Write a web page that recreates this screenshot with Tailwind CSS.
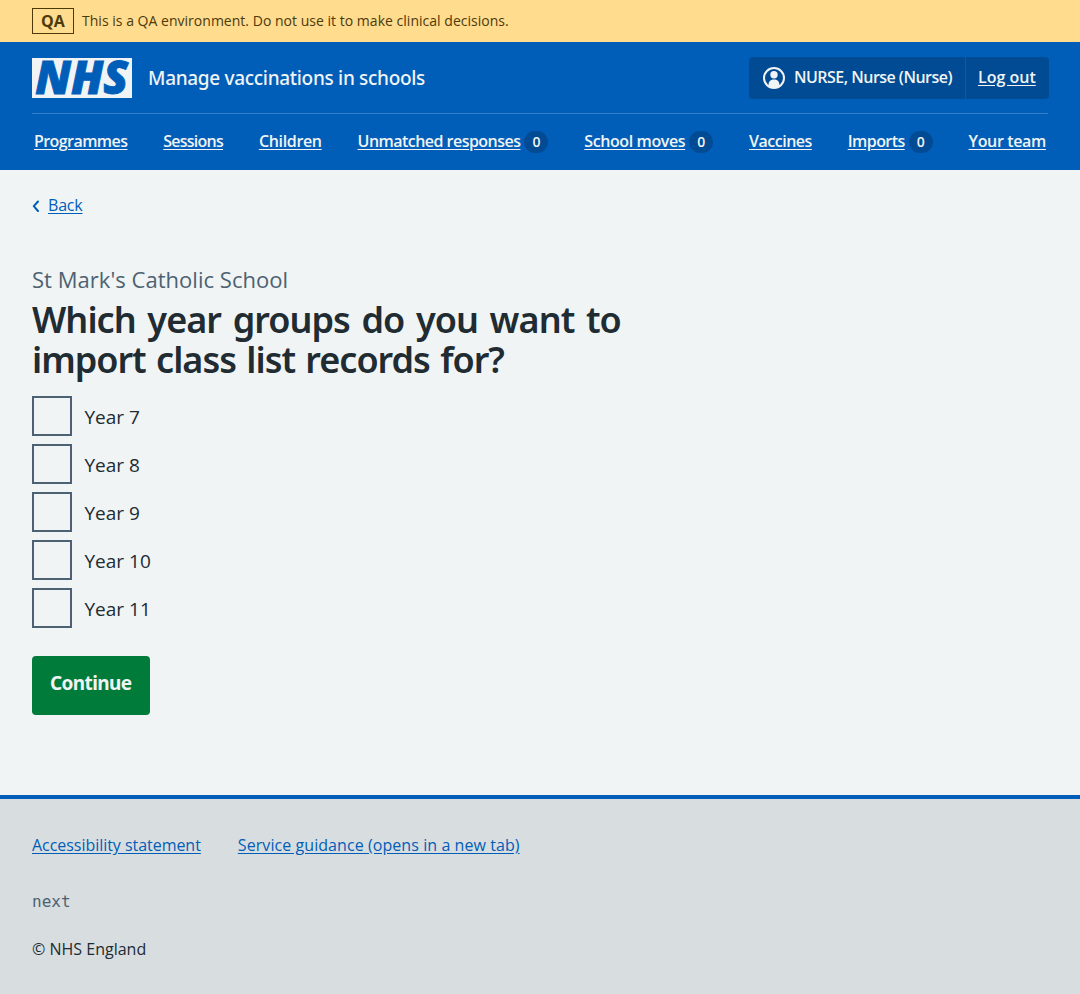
<!DOCTYPE html>
<html lang="en">
<head>
<meta charset="utf-8">
<title>Manage vaccinations in schools</title>
<script src="https://cdn.jsdelivr.net/npm/@tailwindcss/browser@4"></script>
</head>
<body class="flex min-h-[994px] flex-col bg-[#f0f4f5] font-['Open_Sans','Noto_Sans',sans-serif] text-[#212b32]">
  <div class="flex h-[42px] items-center gap-2 bg-[#ffdc8e] px-8 text-[#4d3a0b]">
    <strong class="flex h-[26px] w-[42px] items-center justify-center border border-[#4d3a0b] text-base leading-none font-bold">QA</strong>
    <span class="text-sm tracking-[0.02px]">This is a QA environment. Do not use it to make clinical decisions.</span>
  </div>

  <header class="h-32 bg-[#005eb8] px-8 text-[#f0f4f5]">
    <div class="-mr-px flex h-[71px] items-center justify-between">
      <div class="flex items-center gap-4">
        <svg class="h-10 w-[100px] overflow-visible" viewBox="0 0 100 40" role="img" aria-label="NHS">
          <rect width="100" height="40" fill="#f0f4f5"/>
          <text x="3.2" y="36" textLength="93" lengthAdjust="spacingAndGlyphs" fill="#005eb8" stroke="#005eb8" stroke-width="0.9" class="font-['Open_Sans',sans-serif] text-[45.500px] font-extrabold italic">NHS</text>
        </svg>
        <span class="pt-px font-['Noto_Sans',sans-serif] text-[19px] font-medium tracking-[-0.31px]">Manage vaccinations in schools</span>
      </div>
      <div class="flex h-[42px] w-[300px] rounded bg-[#004b93] text-base font-semibold">
        <div class="flex w-[217px] items-center gap-2 border-r border-[#005eb8] pl-[13px]">
          <svg class="size-6 shrink-0" viewBox="0 0 24 24" fill="#f0f4f5" aria-hidden="true">
            <circle cx="12" cy="12" r="10" fill="none" stroke="#f0f4f5" stroke-width="2"/>
            <circle cx="12" cy="8.7" r="3.7"/>
            <path d="M6.6 20.6v-2.300c0-2.900 2.200-4.900 5.400-4.900s5.400 2 5.400 4.900v2.300C15.800 21.800 14 22.300 12 22.300s-3.800-.5-5.400-1.700z"/>
          </svg>
          <span class="pb-0.5 tracking-[-0.52px] whitespace-nowrap">NURSE, Nurse (Nurse)</span>
        </div>
        <a class="flex items-center pb-0.5 pl-3 whitespace-nowrap"><span class="underline underline-offset-2">Log out</span></a>
      </div>
    </div>
    <nav class="flex h-[57px] items-center justify-between border-t border-[#337ec6] px-0.5 text-base font-semibold whitespace-nowrap">
      <a class="pb-0.5 tracking-[-0.57px] underline underline-offset-2">Programmes</a>
      <a class="pb-0.5 tracking-[-0.75px] underline underline-offset-2">Sessions</a>
      <a class="pb-0.5 tracking-[-0.34px] underline underline-offset-2">Children</a>
      <a class="flex items-center gap-1"><span class="pb-0.5 tracking-[-0.53px] underline underline-offset-2">Unmatched responses</span><span class="flex h-[22px] w-6 items-center justify-center rounded-full bg-[#004b93] text-sm">0</span></a>
      <a class="flex items-center gap-1"><span class="pb-0.5 tracking-[-0.40px] underline underline-offset-2">School moves</span><span class="flex h-[22px] w-6 items-center justify-center rounded-full bg-[#004b93] text-sm">0</span></a>
      <a class="pb-0.5 tracking-[-0.49px] underline underline-offset-2">Vaccines</a>
      <a class="flex items-center gap-1"><span class="pb-0.5 tracking-[-0.56px] underline underline-offset-2">Imports</span><span class="flex h-[22px] w-6 items-center justify-center rounded-full bg-[#004b93] text-sm">0</span></a>
      <a class="pb-0.5 tracking-[-0.35px] underline underline-offset-2">Your team</a>
    </nav>
  </header>

  <main class="h-[625px] px-8 pt-6">
    <a class="flex h-6 items-center gap-2 text-base text-[#005eb8]">
      <svg class="h-3 w-2" viewBox="0 0 8 12" fill="none" stroke="#005eb8" stroke-width="2" stroke-linecap="round" stroke-linejoin="round" aria-hidden="true"><path d="M6 1.500 1.800 6.200 6 11"/></svg>
      <span class="pb-0.5 tracking-[-0.2px] underline underline-offset-2">Back</span>
    </a>
    <form class="pt-[46px]">
      <h1 class="font-['Noto_Sans',sans-serif] text-4xl leading-10 font-semibold">
        <span class="mb-1 block h-8 font-['Open_Sans',sans-serif] text-[22px] leading-[31px] font-normal tracking-[0.03px] text-[#4c6272]">St Mark's Catholic School</span>
        <span class="block tracking-[-0.95px] [word-spacing:3.2px]">Which year groups do you want to</span>
        <span class="block tracking-[-1px] [word-spacing:2px]">import class list records for?</span>
      </h1>
      <div class="mt-4 flex flex-col gap-2 text-[19px] leading-7">
        <label class="flex h-10 items-center gap-[12.5px]"><span class="size-10 border-2 border-[#4c6272]"></span><span class="pt-0.5">Year 7</span></label>
        <label class="flex h-10 items-center gap-[12.5px]"><span class="size-10 border-2 border-[#4c6272]"></span><span class="pt-0.5">Year 8</span></label>
        <label class="flex h-10 items-center gap-[12.5px]"><span class="size-10 border-2 border-[#4c6272]"></span><span class="pt-0.5">Year 9</span></label>
        <label class="flex h-10 items-center gap-[12.5px]"><span class="size-10 border-2 border-[#4c6272]"></span><span class="pt-0.5">Year 10</span></label>
        <label class="flex h-10 items-center gap-[12.5px]"><span class="size-10 border-2 border-[#4c6272]"></span><span class="pt-0.5">Year 11</span></label>
      </div>
      <button type="button" class="mt-7 flex h-[59px] w-[117.5px] items-center justify-center rounded bg-[#007b3a] pb-1 font-['Noto_Sans',sans-serif] text-[19px] font-bold tracking-[-0.6px] text-[#f0f4f5]">Continue</button>
    </form>
  </main>

  <footer class="flex-1 border-t-4 border-[#005eb8] bg-[#d8dde0] px-8 pt-[34px] text-base leading-6">
    <div class="flex gap-[37px] text-[#005eb8]">
      <a class="tracking-[-0.04px] underline underline-offset-2">Accessibility statement</a>
      <a class="tracking-[0.07px] underline underline-offset-2">Service guidance (opens in a new tab)</a>
    </div>
    <p class="mt-[33px] font-['DejaVu_Sans_Mono',monospace] text-[#4c6272]">next</p>
    <p class="mt-[23px]">© NHS England</p>
  </footer>
</body>
</html>
